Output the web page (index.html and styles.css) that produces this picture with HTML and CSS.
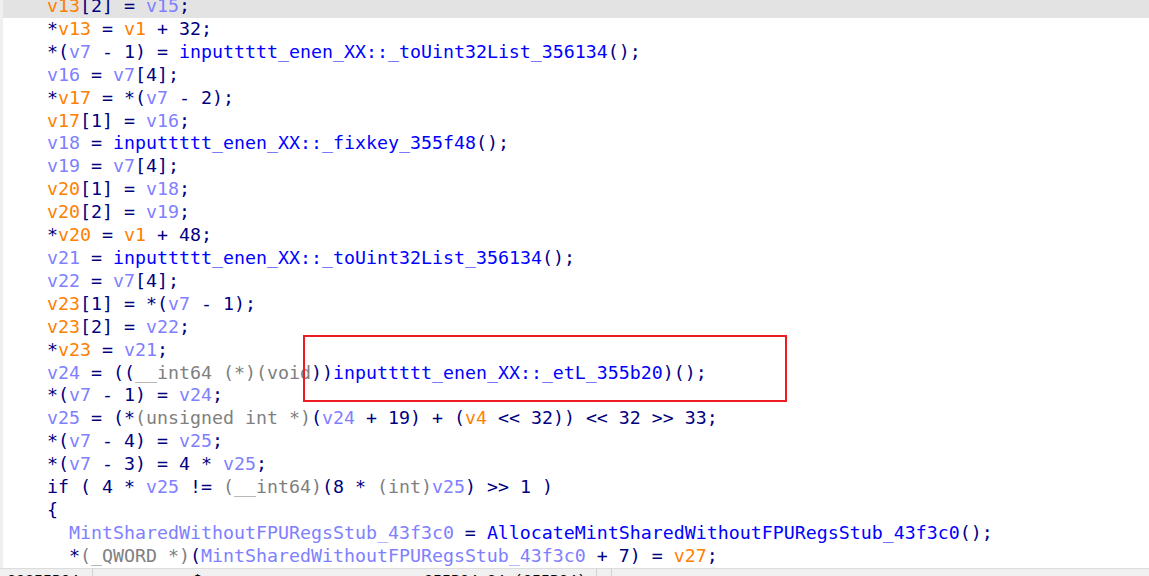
FILE: index.html
```html
<!DOCTYPE html>
<html lang="en">
<head>
    <meta charset="UTF-8">
    <title>Pseudocode-A</title>
    <link rel="stylesheet" href="styles.css">
</head>
<body>
    <div class="screen">
        <!-- Pseudocode view -->
        <div class="pseudo">
            <div class="code">
<div class="line current">    <span class="o">v13</span>[2] = <span class="v">v15</span>;</div>
<div class="line">    *<span class="o">v13</span> = <span class="o">v1</span> + 32;</div>
<div class="line">    *(<span class="v">v7</span> - 1) = <span class="f">inputtttt_enen_XX::_toUint32List_356134</span>();</div>
<div class="line">    <span class="v">v16</span> = <span class="v">v7</span>[4];</div>
<div class="line">    *<span class="o">v17</span> = *(<span class="v">v7</span> - 2);</div>
<div class="line">    <span class="o">v17</span>[1] = <span class="v">v16</span>;</div>
<div class="line">    <span class="v">v18</span> = <span class="f">inputtttt_enen_XX::_fixkey_355f48</span>();</div>
<div class="line">    <span class="v">v19</span> = <span class="v">v7</span>[4];</div>
<div class="line">    <span class="o">v20</span>[1] = <span class="v">v18</span>;</div>
<div class="line">    <span class="o">v20</span>[2] = <span class="v">v19</span>;</div>
<div class="line">    *<span class="o">v20</span> = <span class="o">v1</span> + 48;</div>
<div class="line">    <span class="v">v21</span> = <span class="f">inputtttt_enen_XX::_toUint32List_356134</span>();</div>
<div class="line">    <span class="v">v22</span> = <span class="v">v7</span>[4];</div>
<div class="line">    <span class="o">v23</span>[1] = *(<span class="v">v7</span> - 1);</div>
<div class="line">    <span class="o">v23</span>[2] = <span class="v">v22</span>;</div>
<div class="line">    *<span class="o">v23</span> = <span class="v">v21</span>;</div>
<div class="line">    <span class="v">v24</span> = ((<span class="t">__int64 (*)(void</span>))<span class="f">inputtttt_enen_XX::_etL_355b20</span>)();</div>
<div class="line">    *(<span class="v">v7</span> - 1) = <span class="v">v24</span>;</div>
<div class="line">    <span class="v">v25</span> = (*<span class="t">(unsigned int *)</span>(<span class="v">v24</span> + 19) + (<span class="o">v4</span> &lt;&lt; 32)) &lt;&lt; 32 &gt;&gt; 33;</div>
<div class="line">    *(<span class="v">v7</span> - 4) = <span class="v">v25</span>;</div>
<div class="line">    *(<span class="v">v7</span> - 3) = 4 * <span class="v">v25</span>;</div>
<div class="line">    if ( 4 * <span class="v">v25</span> != <span class="t">(__int64)</span>(8 * <span class="t">(int)</span><span class="v">v25</span>) &gt;&gt; 1 )</div>
<div class="line">    {</div>
<div class="line">      <span class="v">MintSharedWithoutFPURegsStub_43f3c0</span> = <span class="f">AllocateMintSharedWithoutFPURegsStub_43f3c0</span>();</div>
<div class="line">      *<span class="t">(_QWORD *)</span>(<span class="v">MintSharedWithoutFPURegsStub_43f3c0</span> + 7) = <span class="o">v27</span>;</div>
            </div>
            <!-- highlight box drawn over the code -->
            <div class="mark"></div>
        </div>
        <!-- Status line, mostly cut off at the bottom -->
        <div class="status">
            <div class="cell first">00355B04</div>
            <div class="cell main"><span class="dollar">$</span><span class="addr">355B04:34 (355B04)</span></div>
            <div class="cell gap"></div>
            <div class="cell rest"></div>
        </div>
    </div>
</body>
</html>
```
FILE: styles.css
```css
body {
    margin: 0;
    background: #ffffff;
    overflow: hidden;
}

.screen {
    display: flex;
    flex-direction: column;
    width: 1149px;
    height: 576px;
    overflow: hidden;
}

/* Pseudocode area */
.pseudo {
    position: relative;
    flex: 1;
    overflow: hidden;
    border-left: 3px solid #efefef;
}

.code {
    margin-top: -5px;
    font-family: "DejaVu Sans Mono", "Liberation Mono", monospace;
    font-size: 18.27px;
    color: #000080;
}

.line {
    height: 22.92px;
    line-height: 22.92px;
    white-space: pre;
}

.line.current {
    background: #e3e3e3;
}

/* Token colours */
.v { color: #8080ff; }
.o { color: #ff8000; }
.f { color: #0000ff; }
.t { color: #808080; }

/* Red annotation box */
.mark {
    position: absolute;
    left: 300px;
    top: 335px;
    width: 484px;
    height: 67px;
    box-sizing: border-box;
    border: 2px solid #ed1c24;
}

/* Status bar */
.status {
    display: flex;
    height: 7px;
    overflow: hidden;
    background: #f0f0f0;
    border-top: 1px solid #dcdcdc;
    font-family: "Liberation Mono", monospace;
    font-size: 15px;
    line-height: 15px;
    color: #000000;
}

.cell {
    padding: 5px 0 0 7px;
    border-right: 1px solid #d0d0d0;
    white-space: pre;
}

.cell.first {
    width: 85px;
}

.cell.main {
    display: flex;
    justify-content: space-between;
    padding-left: 100px;
    padding-right: 10px;
    box-sizing: border-box;
    width: 504px;
}

.cell.gap {
    width: 14px;
    padding: 0;
}

.cell.rest {
    flex: 1;
    border-right: none;
}
```
